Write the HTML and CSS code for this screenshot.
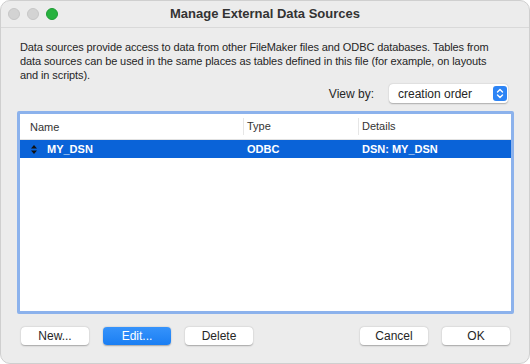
FILE: index.html
```html
<!DOCTYPE html>
<html>
<head>
<meta charset="utf-8">
<title>Manage External Data Sources</title>
<link rel="stylesheet" href="styles.css">
</head>
<body>
<div class="window">
  <div class="titlebar">
    <div class="lights">
      <span class="light"></span>
      <span class="light"></span>
      <span class="light green"></span>
    </div>
    <div class="title">Manage External Data Sources</div>
    <div></div>
  </div>

  <div class="content">
    <p class="intro">Data sources provide access to data from other FileMaker files and ODBC databases. Tables from data sources can be used in the same places as tables defined in this file (for example, on layouts and in scripts).</p>

    <div class="viewby">
      <span class="viewby-label">View by:</span>
      <div class="popup">
        <span>creation order</span>
        <span class="stepper">
          <svg width="8" height="11" viewBox="0 0 8 11"><path d="M1.5 4 L4 1.5 L6.5 4 M1.5 7 L4 9.5 L6.5 7" fill="none" stroke="#fff" stroke-width="1.4" stroke-linecap="round" stroke-linejoin="round"/></svg>
        </span>
      </div>
    </div>

    <div class="list">
      <div class="list-head">
        <div class="cell cell-name">Name</div>
        <div class="cell sep">Type</div>
        <div class="cell sep">Details</div>
      </div>
      <div class="list-row selected">
        <div class="cell cell-name">
          <svg class="handle" width="6" height="9" viewBox="0 0 6 9"><path d="M3 0 L6 3.5 L0 3.5 Z M3 9 L6 5.5 L0 5.5 Z" fill="#111"/></svg>
          <span>MY_DSN</span>
        </div>
        <div class="cell">ODBC</div>
        <div class="cell">DSN: MY_DSN</div>
      </div>
    </div>

    <div class="buttons">
      <div class="btn-group">
        <button class="btn">New...</button>
        <button class="btn primary">Edit...</button>
        <button class="btn">Delete</button>
      </div>
      <div class="btn-group">
        <button class="btn">Cancel</button>
        <button class="btn">OK</button>
      </div>
    </div>
  </div>
</div>
</body>
</html>
```

FILE: styles.css
```css
body {
  margin: 0;
  background-color: #ffffff;
  font-family: "Liberation Sans", Arial, sans-serif;
  color: #262626;
}

.window {
  width: 530px;
  height: 364px;
  box-sizing: border-box;
  border: 1px solid #cfcfcf;
  border-radius: 10px;
  background-color: #ececec;
  overflow: hidden;
}

.titlebar {
  height: 26px;
  border-bottom: 1px solid #d9d9d9;
  display: grid;
  grid-template-columns: 1fr auto 1fr;
  align-items: center;
}

.lights {
  display: flex;
  gap: 7px;
  padding-left: 7px;
}

.light {
  width: 12px;
  height: 12px;
  border-radius: 50%;
  background-color: #d3d3d3;
  box-sizing: border-box;
  border: 0.5px solid #c6c6c6;
}

.light.green {
  background-color: #27b23f;
  border-color: #1f9c35;
}

.title {
  font-size: 13px;
  font-weight: bold;
  color: #333333;
  margin-top: -1px;
}

.content {
  padding: 12px 15px 0 16px;
}

.intro {
  margin: 0;
  width: 476px;
  font-size: 11px;
  line-height: 14px;
  padding-left: 3px;
  letter-spacing: -0.1px;
}

.viewby {
  margin-top: 2px;
  display: flex;
  justify-content: flex-end;
  align-items: center;
  gap: 15px;
  padding-right: 6px;
  font-size: 12px;
}

.popup {
  width: 119px;
  height: 19px;
  box-sizing: border-box;
  background-color: #ffffff;
  border-radius: 4px;
  box-shadow: 0 0.5px 1.5px rgba(0, 0, 0, 0.28);
  display: flex;
  align-items: center;
  justify-content: space-between;
  padding: 0 1px 0 9px;
}

.stepper {
  width: 14px;
  height: 15px;
  border-radius: 3px;
  background-color: #2d84f5;
  display: flex;
  align-items: center;
  justify-content: center;
}

.list {
  margin-top: 8px;
  height: 203px;
  box-sizing: border-box;
  border: 3px solid #8cb2ec;
  border-radius: 2px;
  background-color: #ffffff;
  font-size: 11px;
}

.list-head,
.list-row {
  display: grid;
  grid-template-columns: 223px 115px 1fr;
  align-items: center;
}

.list-head {
  height: 26px;
  border-bottom: 1px solid #e2e2e2;
  color: #333333;
  box-sizing: border-box;
}

.list-row {
  height: 18px;
}

.list-row.selected {
  background-color: #0a63d8;
  color: #ffffff;
  font-weight: bold;
}

.cell {
  padding-left: 4px;
  white-space: nowrap;
}

.cell.sep {
  border-left: 1px solid #e6e6e6;
  padding-left: 3px;
  line-height: 17px;
}

.cell-name {
  padding-left: 10px;
  display: flex;
  align-items: center;
}

.handle {
  margin-left: 1px;
  margin-right: 10px;
}

.buttons {
  margin-top: 13px;
  display: flex;
  justify-content: space-between;
  padding: 0 4px;
}

.btn-group {
  display: flex;
  gap: 14px;
}

.btn {
  width: 68px;
  height: 18px;
  border: none;
  border-radius: 4px;
  background-color: #ffffff;
  box-shadow: 0 0.5px 1.5px rgba(0, 0, 0, 0.3);
  font-family: "Liberation Sans", Arial, sans-serif;
  font-size: 12px;
  color: #262626;
  padding: 0;
}

.btn.primary {
  background: linear-gradient(#3693fb, #1a7ef3);
  color: #ffffff;
}
```
